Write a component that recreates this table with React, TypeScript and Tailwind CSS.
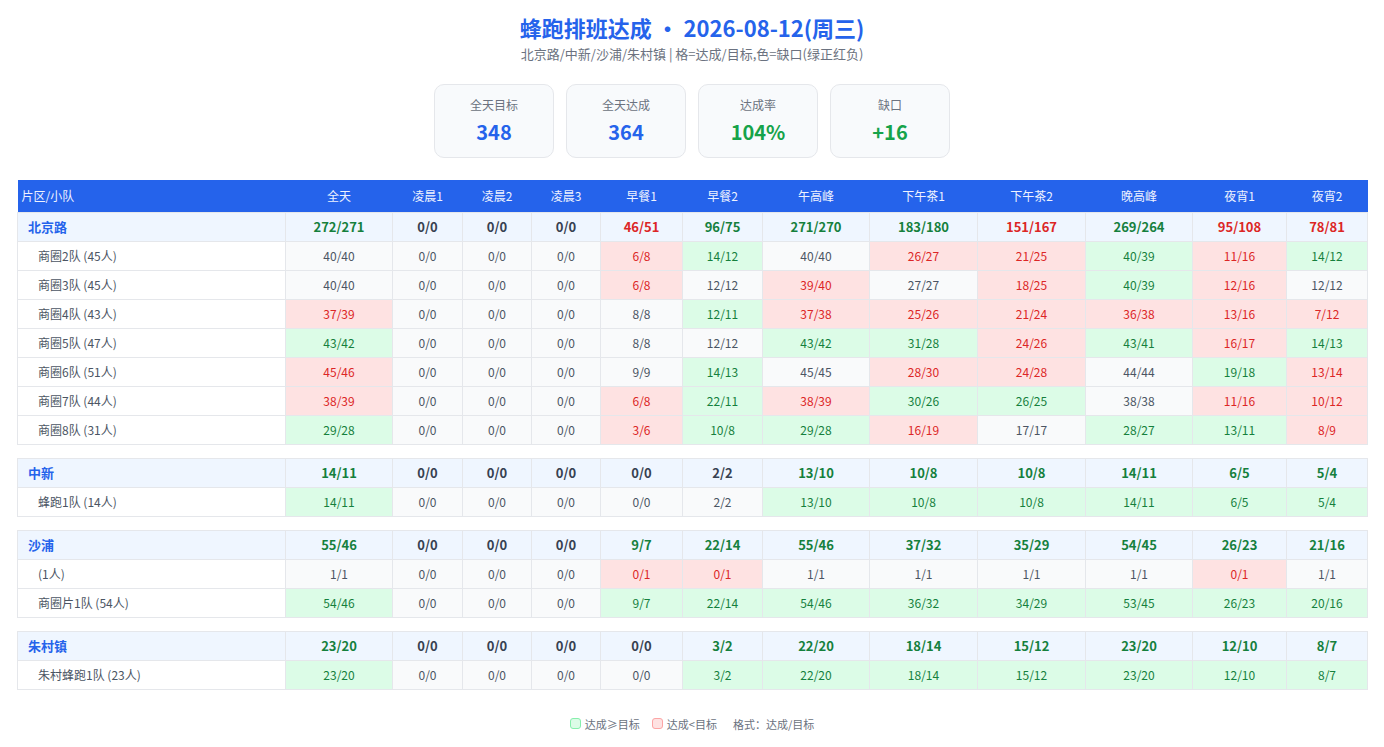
import React from "react";

const cols = ["全天", "凌晨1", "凌晨2", "凌晨3", "早餐1", "早餐2", "午高峰", "下午茶1", "下午茶2", "晚高峰", "夜宵1", "夜宵2"];
const widths = [268, 107, 70, 69, 69, 82, 80, 107, 108, 108, 107, 94, 81];

type Group = { name: string; total: string[]; rows: { name: string; vals: string[] }[] };

const s = (t: string) => t.split(",");

const groups: Group[] = [
  {
    name: "北京路",
    total: s("272/271,0/0,0/0,0/0,46/51,96/75,271/270,183/180,151/167,269/264,95/108,78/81"),
    rows: [
      { name: "商圈2队 (45人)", vals: s("40/40,0/0,0/0,0/0,6/8,14/12,40/40,26/27,21/25,40/39,11/16,14/12") },
      { name: "商圈3队 (45人)", vals: s("40/40,0/0,0/0,0/0,6/8,12/12,39/40,27/27,18/25,40/39,12/16,12/12") },
      { name: "商圈4队 (43人)", vals: s("37/39,0/0,0/0,0/0,8/8,12/11,37/38,25/26,21/24,36/38,13/16,7/12") },
      { name: "商圈5队 (47人)", vals: s("43/42,0/0,0/0,0/0,8/8,12/12,43/42,31/28,24/26,43/41,16/17,14/13") },
      { name: "商圈6队 (51人)", vals: s("45/46,0/0,0/0,0/0,9/9,14/13,45/45,28/30,24/28,44/44,19/18,13/14") },
      { name: "商圈7队 (44人)", vals: s("38/39,0/0,0/0,0/0,6/8,22/11,38/39,30/26,26/25,38/38,11/16,10/12") },
      { name: "商圈8队 (31人)", vals: s("29/28,0/0,0/0,0/0,3/6,10/8,29/28,16/19,17/17,28/27,13/11,8/9") },
    ],
  },
  {
    name: "中新",
    total: s("14/11,0/0,0/0,0/0,0/0,2/2,13/10,10/8,10/8,14/11,6/5,5/4"),
    rows: [{ name: "蜂跑1队 (14人)", vals: s("14/11,0/0,0/0,0/0,0/0,2/2,13/10,10/8,10/8,14/11,6/5,5/4") }],
  },
  {
    name: "沙浦",
    total: s("55/46,0/0,0/0,0/0,9/7,22/14,55/46,37/32,35/29,54/45,26/23,21/16"),
    rows: [
      { name: "(1人)", vals: s("1/1,0/0,0/0,0/0,0/1,0/1,1/1,1/1,1/1,1/1,0/1,1/1") },
      { name: "商圈片1队 (54人)", vals: s("54/46,0/0,0/0,0/0,9/7,22/14,54/46,36/32,34/29,53/45,26/23,20/16") },
    ],
  },
  {
    name: "朱村镇",
    total: s("23/20,0/0,0/0,0/0,0/0,3/2,22/20,18/14,15/12,23/20,12/10,8/7"),
    rows: [{ name: "朱村蜂跑1队 (23人)", vals: s("23/20,0/0,0/0,0/0,0/0,3/2,22/20,18/14,15/12,23/20,12/10,8/7") }],
  },
];

function cmp(v: string) {
  const [a, b] = v.split("/").map(Number);
  return a > b ? 1 : a < b ? -1 : 0;
}

function ColGroup() {
  return (
    <colgroup>
      {widths.map((w, i) => (
        <col key={i} style={{ width: w }} />
      ))}
    </colgroup>
  );
}

function Block({ g, header }: { g: Group; header: boolean }) {
  return (
    <table className="w-[1350px] table-fixed border-collapse text-[12px]">
      <ColGroup />
      {header && (
        <thead>
          <tr className="h-[32px] bg-[#2563eb] text-[#eef2ff]">
            <th className="px-[4px] text-left font-normal">片区/小队</th>
            {cols.map((c) => (
              <th key={c} className="font-normal text-center">
                {c}
              </th>
            ))}
          </tr>
        </thead>
      )}
      <tbody>
        <tr className="h-[29px] bg-[#eff6ff]">
          <td className="border border-[#e5e7eb] pl-[10px] text-[13px] font-bold text-[#2563eb]">{g.name}</td>
          {g.total.map((v, i) => {
            const c = cmp(v);
            const color = c > 0 ? "text-[#15803d]" : c < 0 ? "text-[#dc2626]" : "text-[#374151]";
            return (
              <td key={i} className={`border border-[#e5e7eb] text-center text-[13px] font-bold ${color}`}>
                {v}
              </td>
            );
          })}
        </tr>
        {g.rows.map((r) => (
          <tr key={r.name} className="h-[29px]">
            <td className="border border-[#e5e7eb] bg-white pl-[20px] text-[#4b5563]">{r.name}</td>
            {r.vals.map((v, i) => {
              const c = cmp(v);
              const cls =
                c > 0
                  ? "bg-[#dcfce7] text-[#15803d]"
                  : c < 0
                  ? "bg-[#fee2e2] text-[#dc2626]"
                  : "bg-[#f9fafb] text-[#4b5563]";
              return (
                <td key={i} className={`border border-[#e5e7eb] text-center ${cls}`}>
                  {v}
                </td>
              );
            })}
          </tr>
        ))}
      </tbody>
    </table>
  );
}

function Card({ label, value, color }: { label: string; value: string; color: string }) {
  return (
    <div className="flex h-[74px] w-[120px] flex-col items-center justify-center rounded-[10px] border border-[#e5e7eb] bg-[#f8fafc]">
      <div className="text-[12px] leading-[16px] text-[#6b7280]">{label}</div>
      <div className={`mt-[6px] text-[20px] font-bold leading-[26px] ${color}`}>{value}</div>
    </div>
  );
}

export default function App() {
  return (
    <div
      className="min-h-[747px] bg-white px-[17px] pt-[10px]"
      style={{ fontFamily: '"Noto Sans CJK SC", "Noto Sans", sans-serif' }}
    >
      <h1 className="text-center text-[22px] font-bold leading-[34px] text-[#2563eb]">蜂跑排班达成 · 2026-08-12(周三)</h1>
      <div className="mt-[1px] text-center text-[13px] leading-[18px] text-[#6b7280]">
        北京路/中新/沙浦/朱村镇 | 格=达成/目标,色=缺口(绿正红负)
      </div>
      <div className="mt-[21px] flex justify-center gap-[12px]">
        <Card label="全天目标" value="348" color="text-[#2563eb]" />
        <Card label="全天达成" value="364" color="text-[#2563eb]" />
        <Card label="达成率" value="104%" color="text-[#16a34a]" />
        <Card label="缺口" value="+16" color="text-[#16a34a]" />
      </div>
      <div className="mt-[22px] flex flex-col gap-[13px]">
        {groups.map((g, i) => (
          <Block key={g.name} g={g} header={i === 0} />
        ))}
      </div>
      <div className="mt-[26px] flex items-center justify-center text-[11px] leading-[16px] text-[#6b7280]">
        <span className="mr-[4px] inline-block h-[11px] w-[11px] rounded-[3px] border border-[#86efac] bg-[#dcfce7]" />
        <span>达成≥目标</span>
        <span className="ml-[12px] mr-[4px] inline-block h-[11px] w-[11px] rounded-[3px] border border-[#fca5a5] bg-[#fee2e2]" />
        <span>达成&lt;目标</span>
        <span className="ml-[16px]">格式：达成/目标</span>
      </div>
    </div>
  );
}
